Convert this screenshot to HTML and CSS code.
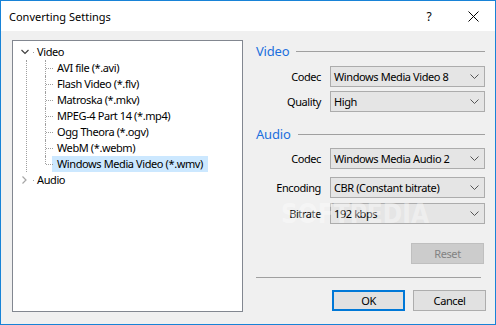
FILE: index.html
```html
<!DOCTYPE html>
<html>
<head>
<meta charset="utf-8">
<link rel="stylesheet" href="styles.css">
</head>
<body>
<div class="window">
  <div class="titlebar">
    <span class="title">Converting Settings</span>
    <div class="tb-buttons">
      <span class="tb-btn help">?</span>
      <span class="tb-btn close"><svg width="11" height="11" viewBox="0 0 11 11"><path d="M0.5 0.5 L10.5 10.5 M10.5 0.5 L0.5 10.5" stroke="#000" stroke-width="1" fill="none"/></svg></span>
    </div>
  </div>
  <div class="content">
    <div class="tree-box">
      <ul class="tree">
        <li class="node">
          <div class="row"><span class="toggle"><svg width="16" height="16" viewBox="0 0 16 16"><polyline points="4.5,6 8,9.5 11.5,6" fill="none" stroke="#404040" stroke-width="1.2"/></svg></span><span class="stub"></span><span class="label">Video</span></div>
          <ul class="children">
            <li><span class="label">AVI file (*.avi)</span></li>
            <li><span class="label">Flash Video (*.flv)</span></li>
            <li><span class="label">Matroska (*.mkv)</span></li>
            <li><span class="label">MPEG-4 Part 14 (*.mp4)</span></li>
            <li><span class="label">Ogg Theora (*.ogv)</span></li>
            <li><span class="label">WebM (*.webm)</span></li>
            <li class="last"><span class="label selected">Windows Media Video (*.wmv)</span></li>
          </ul>
        </li>
        <li class="node">
          <div class="row"><span class="toggle"><svg width="16" height="16" viewBox="0 0 16 16"><polyline points="5.5,4.5 9,8 5.5,11.5" fill="none" stroke="#a6a6a6" stroke-width="1.2"/></svg></span><span class="stub"></span><span class="label">Audio</span></div>
        </li>
      </ul>
    </div>
    <div class="panel">
      <div class="section-head"><span>Video</span><span class="rule"></span></div>
      <div class="field f-first"><span class="flabel">Codec</span><div class="combo"><span>Windows Media Video 8</span><svg width="9" height="6" viewBox="0 0 9 6"><polyline points="0.5,0.5 4.5,4.5 8.5,0.5" fill="none" stroke="#555" stroke-width="1"/></svg></div></div>
      <div class="field f-q"><span class="flabel">Quality</span><div class="combo"><span>High</span><svg width="9" height="6" viewBox="0 0 9 6"><polyline points="0.5,0.5 4.5,4.5 8.5,0.5" fill="none" stroke="#555" stroke-width="1"/></svg></div></div>
      <div class="section-head s-audio"><span>Audio</span><span class="rule"></span></div>
      <div class="field f-ac"><span class="flabel">Codec</span><div class="combo"><span>Windows Media Audio 2</span><svg width="9" height="6" viewBox="0 0 9 6"><polyline points="0.5,0.5 4.5,4.5 8.5,0.5" fill="none" stroke="#555" stroke-width="1"/></svg></div></div>
      <div class="field f-enc"><span class="flabel">Encoding</span><div class="combo"><span>CBR (Constant bitrate)</span><svg width="9" height="6" viewBox="0 0 9 6"><polyline points="0.5,0.5 4.5,4.5 8.5,0.5" fill="none" stroke="#555" stroke-width="1"/></svg></div></div>
      <div class="field f-br"><span class="flabel">Bitrate</span><div class="combo"><span>192 kbps</span><svg width="9" height="6" viewBox="0 0 9 6"><polyline points="0.5,0.5 4.5,4.5 8.5,0.5" fill="none" stroke="#555" stroke-width="1"/></svg></div></div>
      <div class="btn reset">Reset</div>
      <div class="separator"></div>
      <div class="actions">
        <div class="btn default">OK</div>
        <div class="btn">Cancel</div>
      </div>
    </div>
  </div>
  <div class="watermark">SOFTPEDIA</div>
</div>
</body>
</html>
```

FILE: styles.css
```css
html, body {
  margin: 0;
  padding: 0;
}
body {
  font-family: "Noto Sans", "DejaVu Sans", sans-serif;
  font-size: 11px;
  letter-spacing: -0.4px;
  color: #000;
  background: #fff;
}
.window {
  position: relative;
  width: 496px;
  height: 325px;
  box-sizing: border-box;
  border: 1px solid #1883d7;
  background: #f0f0f0;
  display: flex;
  flex-direction: column;
  overflow: hidden;
}
.titlebar {
  height: 30px;
  flex: none;
  background: #fff;
  display: flex;
  align-items: center;
  padding-left: 8px;
}
.title {
  font-size: 11px;
  letter-spacing: 0;
}
.tb-buttons {
  margin-left: auto;
  display: flex;
  height: 100%;
}
.tb-btn {
  width: 44px;
  display: flex;
  align-items: center;
  justify-content: center;
  font-size: 12px;
}
.content {
  flex: 1;
  display: flex;
  gap: 13px;
  padding: 9px 9px 12px 11px;
}
.tree-box {
  width: 231px;
  height: 272px;
  box-sizing: border-box;
  border: 1px solid #828790;
  background: #fff;
  padding-top: 3px;
}
.tree, .children {
  list-style: none;
  margin: 0;
  padding: 0;
}
.row {
  height: 16px;
  display: flex;
  align-items: center;
}
.toggle {
  width: 16px;
  height: 16px;
  margin-left: 4px;
  display: block;
}
.toggle svg {
  display: block;
}
.stub {
  width: 1px;
  height: 1px;
  background: #a0a0a0;
  margin-right: 3px;
}
.label {
  line-height: 16px;
  white-space: nowrap;
}
.children {
  margin-left: 13px;
  border-left: 1px dotted #a0a0a0;
}
.children li {
  position: relative;
  height: 16px;
  display: flex;
  align-items: center;
}
.children li::before {
  content: "";
  position: absolute;
  left: 18px;
  top: 0;
  bottom: 0;
  border-left: 1px dotted #a0a0a0;
}
.children li.last::before {
  bottom: auto;
  height: 8px;
}
.children li::after {
  content: "";
  position: absolute;
  left: 19px;
  top: 8px;
  width: 7px;
  border-top: 1px dotted #a0a0a0;
}
.children .label {
  margin-left: 25px;
  padding: 0 5px;
  height: 16px;
}
.children .label.selected {
  background: #cce8ff;
}
.panel {
  width: 230px;
  display: flex;
  flex-direction: column;
}
.section-head {
  height: 20px;
  margin-top: 1px;
  display: flex;
  align-items: center;
  color: #1c6fdd;
  font-size: 13px;
  letter-spacing: -0.2px;
}
.section-head .rule {
  flex: 1;
  height: 1px;
  background: #a0a0a0;
  margin-left: 7px;
  margin-right: 1px;
}
.s-audio {
  margin-top: 12px;
}
.field {
  display: flex;
  align-items: center;
  gap: 9px;
}
.f-first { margin-top: 5px; }
.f-q { margin-top: 4px; }
.f-ac { margin-top: 4px; }
.f-enc { margin-top: 8px; }
.f-br { margin-top: 5px; }
.flabel {
  width: 65px;
  text-align: right;
}
.combo {
  width: 155px;
  height: 21px;
  box-sizing: border-box;
  border: 1px solid #acacac;
  background: #e5e5e5;
  display: flex;
  align-items: center;
  justify-content: space-between;
  padding: 0 5px 0 3px;
}
.combo svg {
  display: block;
}
.btn {
  width: 73px;
  height: 21px;
  box-sizing: border-box;
  border: 1px solid #adadad;
  background: #e1e1e1;
  display: flex;
  align-items: center;
  justify-content: center;
}
.btn.default {
  border: 2px solid #0078d7;
}
.btn.reset {
  align-self: flex-end;
  margin-top: 19px;
  margin-right: 2px;
  background: #cccccc;
  border-color: #bfbfbf;
  color: #838383;
}
.separator {
  width: 225px;
  height: 1px;
  background: #a0a0a0;
  margin-top: 13px;
}
.actions {
  margin-top: 12px;
  display: flex;
  justify-content: flex-end;
  gap: 8px;
}
.watermark {
  position: absolute;
  left: 280px;
  top: 198px;
  font-family: "DejaVu Sans Condensed", "DejaVu Sans", sans-serif;
  font-weight: bold;
  font-size: 26px;
  letter-spacing: 0;
  color: rgba(255, 255, 255, 0.4);
  pointer-events: none;
}
```
